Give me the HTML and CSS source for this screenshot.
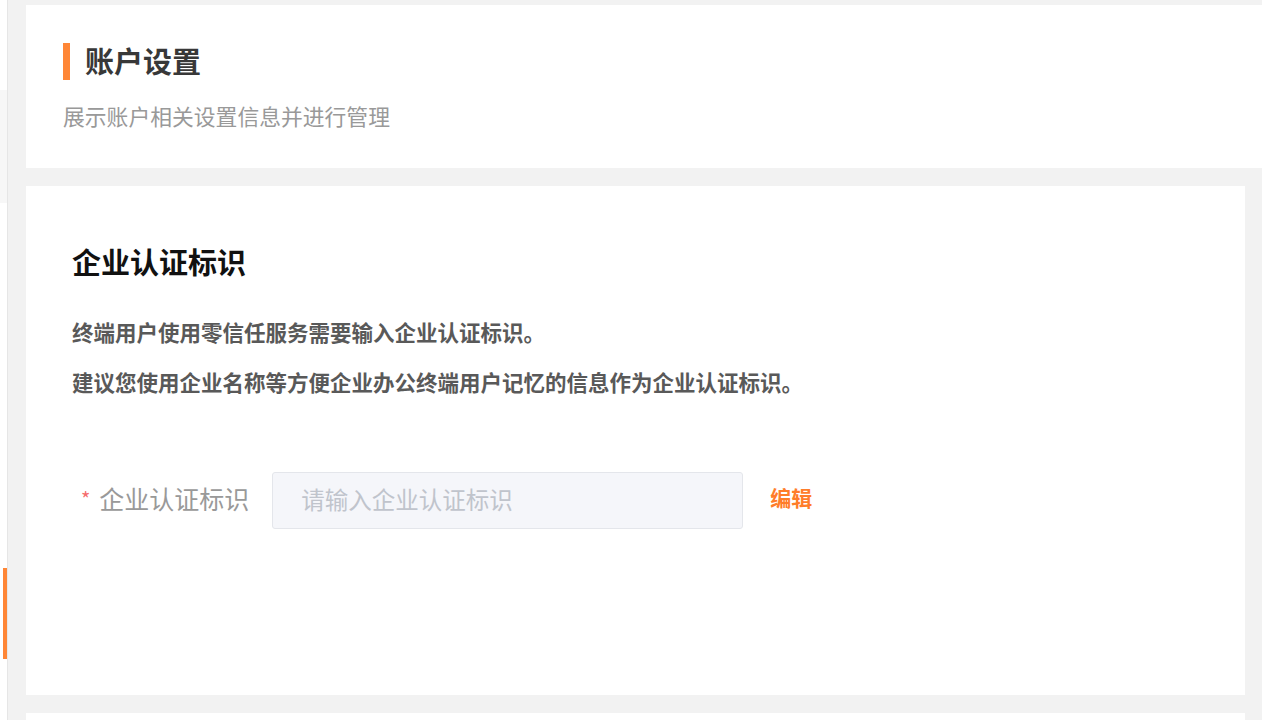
FILE: index.html
```html
<!DOCTYPE html>
<html lang="zh-CN">
<head>
  <meta charset="UTF-8" />
  <title>账户设置</title>
  <link rel="stylesheet" href="styles.css">
</head>
<body>
  <div class="layout">
    <aside class="sidebar">
      <div class="side-top"></div>
      <div class="side-group"></div>
      <div class="side-item"></div>
      <div class="side-item active"></div>
    </aside>

    <main class="main">
      <section class="page-head">
        <div class="head-title">
          <span class="head-bar"></span>
          <h2>账户设置</h2>
        </div>
        <p class="head-desc">展示账户相关设置信息并进行管理</p>
      </section>

      <section class="card">
        <h3 class="card-title">企业认证标识</h3>
        <p class="card-tip">终端用户使用零信任服务需要输入企业认证标识。</p>
        <p class="card-tip">建议您使用企业名称等方便企业办公终端用户记忆的信息作为企业认证标识。</p>

        <form class="form-row" id="idForm">
          <label class="form-label" for="companyId"><span class="req">*</span>企业认证标识</label>
          <input class="form-input" id="companyId" type="text" placeholder="请输入企业认证标识" disabled />
          <a class="edit-link" href="#">编辑</a>
        </form>
      </section>

      <section class="card card-next"></section>
    </main>
  </div>
</body>
</html>
```

FILE: styles.css
```css
* {
  box-sizing: border-box;
}

html, body {
  margin: 0;
  height: 100%;
  overflow: hidden;
}

body {
  font-family: "Noto Sans CJK SC", "Noto Sans", sans-serif;
  background: #f2f2f2;
  color: #333;
}

.layout {
  display: flex;
  height: 100%;
}

.sidebar {
  width: 8px;
  flex-shrink: 0;
  background: #fff;
  border-right: 1px solid #e6e6e6;
  display: flex;
  flex-direction: column;
}

.side-top {
  height: 90px;
}

.side-group {
  height: 113px;
  background: #f7f7f7;
}

.side-item {
  height: 365px;
}

.side-item.active {
  height: 91px;
  margin-left: 3px;
  background: #ff8636;
}

.main {
  flex: 1;
  padding: 5px 0 0 18px;
  display: flex;
  flex-direction: column;
  gap: 18px;
}

.page-head {
  background: #fff;
  height: 163px;
  padding: 38px 37px 0;
}

.head-title {
  display: flex;
  align-items: center;
  gap: 15px;
  height: 37px;
}

.head-bar {
  width: 7px;
  height: 37px;
  background: #ff8636;
}

.head-title h2 {
  margin: 0 0 2px;
  font-size: 29px;
  font-weight: 700;
  color: #383838;
  line-height: 37px;
}

.head-desc {
  margin: 21px 0 0;
  font-size: 21.8px;
  line-height: 30px;
  color: #999;
}

.card {
  background: #fff;
  margin-right: 17px;
  height: 509px;
  padding: 55px 46px 0;
  flex-shrink: 0;
}

.card-title {
  margin: 0 0 26px;
  font-size: 29px;
  line-height: 40px;
  font-weight: 700;
  color: #111;
}

.card-tip {
  margin: 0;
  font-size: 21.5px;
  line-height: 50px;
  font-weight: 700;
  color: #595959;
}

.form-row {
  display: flex;
  align-items: center;
  margin-top: 65px;
  padding-left: 9px;
}

.form-label {
  font-size: 25px;
  color: #999;
  display: flex;
  align-items: center;
  padding-bottom: 5px;
}

.req {
  color: #f56c6c;
  font-size: 20px;
  margin-right: 9px;
}

.form-input {
  margin-left: 23px;
  width: 471px;
  height: 57px;
  padding: 0 28px 4px;
  background: #f5f6fa;
  border: 1px solid #e4e6eb;
  border-radius: 3px;
  font-family: inherit;
  font-size: 23.5px;
  color: #333;
}

.form-input::placeholder {
  color: #c0c4cc;
}

.edit-link {
  margin-left: 27px;
  padding-bottom: 7px;
  font-size: 21px;
  font-weight: 700;
  color: #ff7d2a;
  text-decoration: none;
}

.card-next {
  height: auto;
  flex: 1;
  padding: 0;
}
```
